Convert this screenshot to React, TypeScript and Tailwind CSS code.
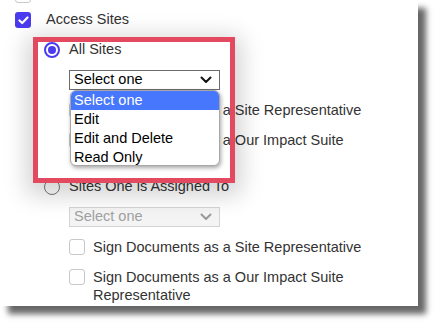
import React from 'react';

const font = { fontFamily: '"Liberation Sans", Arial, sans-serif' };

const Box: React.FC<{ checked?: boolean }> = ({ checked }) =>
  checked ? (
    <span className="block w-4 h-4 shrink-0 rounded-[3px] bg-[#4b3bef] flex items-center justify-center">
      <svg width="11" height="9" viewBox="0 0 11 9">
        <path d="M1.5 4.5 L4.2 7 L9.5 1.5" fill="none" stroke="#fff" strokeWidth="2.2" strokeLinecap="round" strokeLinejoin="round" />
      </svg>
    </span>
  ) : (
    <span className="block w-4 h-4 shrink-0 rounded-[3px] border border-[#c8c8c8] bg-white" />
  );

const Chevron: React.FC<{ color: string }> = ({ color }) => (
  <svg width="12" height="8" viewBox="0 0 12 8">
    <path d="M1.5 1.5 L6 6 L10.5 1.5" fill="none" stroke={color} strokeWidth="2" strokeLinecap="round" strokeLinejoin="round" />
  </svg>
);

const SubCheck: React.FC<{ label: string; className?: string }> = ({ label, className }) => (
  <div className={`flex items-start gap-[8px] leading-[18px] ${className ?? ''}`}>
    <span className="block mt-[1px] shrink-0">
      <Box />
    </span>
    <span>{label}</span>
  </div>
);

const options = ['Select one', 'Edit', 'Edit and Delete', 'Read Only'];

export default function App() {
  return (
    <div className="w-[441px] h-[329px] bg-white relative overflow-hidden text-[14.5px] text-[#333]" style={font}>
      <div className="w-[418px] h-[306px] bg-white relative overflow-hidden shadow-[8px_8px_6px_rgba(0,0,0,0.6)]">
        <div className="pl-[15px]">
          <div className="mt-[-13px] h-4 flex items-center gap-[15px]">
            <Box />
            <span className="mt-[-14px]">Allow Site Editing</span>
          </div>
          <div className="mt-[9px] h-4 flex items-center gap-[15px]">
            <Box checked />
            <span>Access Sites</span>
          </div>
        </div>

        <div className="pl-[44px] pr-2">
          {/* All Sites */}
          <div className="mt-[14px] h-4 flex items-center gap-[9px]">
            <span className="w-4 h-4 rounded-full border-2 border-[#4b3bef] flex items-center justify-center">
              <span className="w-2 h-2 rounded-full bg-[#4b3bef]" />
            </span>
            <span>All Sites</span>
          </div>
          <div className="ml-[25px]">
            <div className="mt-3 relative w-[151px]">
              <div className="h-5 border border-[#6b6b6b] bg-white flex items-center justify-between pl-[4px] pr-[7px] text-black">
                <span>Select one</span>
                <Chevron color="#111" />
              </div>
              <div className="absolute left-[1px] top-full w-[150px] h-[76px] z-20 bg-white border border-[#a8a8a8] rounded-[6px] overflow-hidden shadow-[1px_2px_4px_rgba(0,0,0,0.35)] text-black">
                {options.map((o, i) => (
                  <div
                    key={o}
                    className={`h-[19px] leading-[19px] pl-[3px] ${i === 0 ? 'bg-[#4677fc] text-white' : ''}`}
                  >
                    {o}
                  </div>
                ))}
              </div>
            </div>
            <SubCheck className="mt-[11px]" label="Sign Documents as a Site Representative" />
            <SubCheck className="mt-3" label="Sign Documents as a Our Impact Suite Representative" />
          </div>

          {/* Sites One is Assigned To */}
          <div className="mt-3 h-4 flex items-center gap-[9px]">
            <span className="w-4 h-4 rounded-full border border-[#777] bg-white" />
            <span>Sites One is Assigned To</span>
          </div>
          <div className="ml-[25px]">
            <div className="mt-3 w-[151px] h-5 border border-[#d4d4d4] bg-[#f4f4f4] flex items-center justify-between pl-[4px] pr-[7px] text-[#a0a0a0]">
              <span>Select one</span>
              <Chevron color="#9a9a9a" />
            </div>
            <SubCheck className="mt-[11px]" label="Sign Documents as a Site Representative" />
            <SubCheck className="mt-3" label="Sign Documents as a Our Impact Suite Representative" />
          </div>
        </div>

        {/* highlight annotation */}
        <div className="absolute left-[33px] top-[37px] w-[202px] h-[146px] border-[5px] border-[#e34a60] z-10 shadow-[0_6px_22px_6px_rgba(0,0,0,0.18)] pointer-events-none" />
      </div>
    </div>
  );
}
